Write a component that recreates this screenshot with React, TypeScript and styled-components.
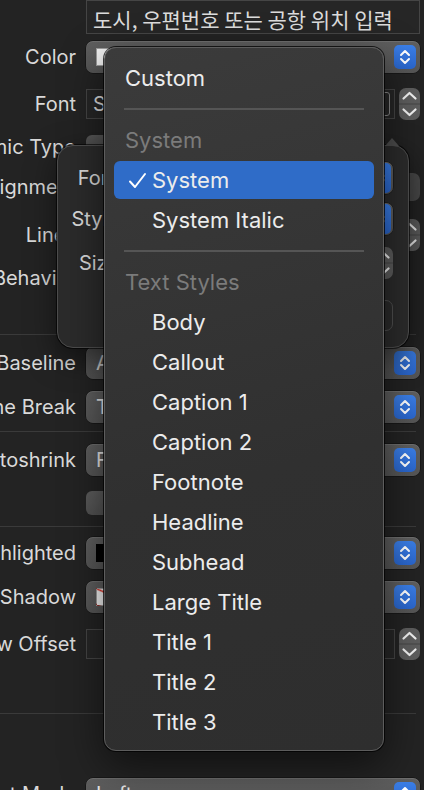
import styled, { createGlobalStyle } from "styled-components";

const GlobalStyle = createGlobalStyle`
  html, body {
    margin: 0;
    padding: 0;
    background: #232323;
  }
  body {
    font-family: Inter, "Noto Sans", sans-serif;
  }
`;

// Whole window, clipped to the screenshot size
const Page = styled.div`
  position: relative;
  width: 424px;
  height: 790px;
  overflow: hidden;
  background: #232323;
  color: #dedede;
  font-family: Inter, "Noto Sans CJK KR", sans-serif;
`;

const Inspector = styled.div`
  display: flex;
  flex-direction: column;
`;

// One inspector row: right aligned label + control
const Row = styled.div<{ $h: number; $mt?: number; $align?: string }>`
  display: grid;
  grid-template-columns: 76px 1fr;
  column-gap: 10px;
  align-items: ${(p) => p.$align ?? "center"};
  height: ${(p) => p.$h}px;
  margin-top: ${(p) => p.$mt ?? 0}px;
  padding-right: 4px;
`;

const Label = styled.div`
  min-width: 0;
  display: flex;
  justify-content: flex-end;
  white-space: nowrap;
  font-size: 20px;
  color: #d9d9d9;
`;

const Separator = styled.div<{ $mt: number }>`
  height: 1px;
  margin-top: ${(p) => p.$mt}px;
  margin-right: 8px;
  background: #3a3a3a;
`;

const Popup = styled.div<{ $pr?: number }>`
  height: 32px;
  box-sizing: border-box;
  border-radius: 7px;
  background: linear-gradient(#5f5f5f, #565656);
  box-shadow: 0 0 0 0.5px rgba(0, 0, 0, 0.6),
    inset 0 1px 0 rgba(255, 255, 255, 0.1);
  display: flex;
  align-items: center;
  gap: 8px;
  padding: 0 ${(p) => p.$pr ?? 4}px 0 10px;
  font-size: 20px;
  color: #e6e6e6;
  white-space: nowrap;
`;

const PopupText = styled.span`
  flex: 1;
  overflow: hidden;
`;

const Swatch = styled.span<{ $color: string; $none?: boolean }>`
  width: 38px;
  height: 16px;
  flex: none;
  border: 1px solid rgba(0, 0, 0, 0.35);
  background: ${(p) =>
    p.$none
      ? "linear-gradient(to top right, #f4f4f4 calc(50% - 1.5px), #e0362c 50%, #f4f4f4 calc(50% + 1.5px))"
      : p.$color};
`;

const BlueButton = styled.span<{ $h?: number }>`
  width: 22px;
  height: ${(p) => p.$h ?? 24}px;
  flex: none;
  border-radius: 5px;
  background: linear-gradient(#3b7fe8, #2a66cc);
  display: flex;
  align-items: center;
  justify-content: center;
`;

const FieldGroup = styled.div`
  display: flex;
  align-items: center;
  gap: 4px;
`;

const Field = styled.div<{ $h?: number }>`
  flex: 1;
  height: ${(p) => p.$h ?? 30}px;
  box-sizing: border-box;
  border: 1px solid #454545;
  background: #262626;
  display: flex;
  align-items: center;
  padding: 0 4px 0 6px;
  font-size: 20px;
  color: #dadada;
  white-space: nowrap;
  overflow: hidden;
`;

const KoreanField = styled(Field)`
  grid-column: 2;
  font-family: "Noto Sans CJK KR", sans-serif;
  font-size: 21px;
  padding-top: 3px;
  color: #dcdcdc;
`;

const FieldText = styled.span`
  flex: 1;
`;

const FontButton = styled.span`
  width: 20px;
  height: 24px;
  box-sizing: border-box;
  border: 1.5px solid #8a8a8a;
  border-radius: 3px;
  flex: none;
`;

const Stepper = styled.div`
  width: 21px;
  height: 32px;
  flex: none;
  border-radius: 7px;
  background: #5d5d5d;
  display: flex;
  align-items: center;
  justify-content: center;
`;

const Checkbox = styled.span`
  width: 26px;
  height: 24px;
  border-radius: 6px;
  background: linear-gradient(#5c5c5c, #525252);
`;

const Segmented = styled.div`
  height: 28px;
  border-radius: 7px;
  background: #4a4a4a;
`;

// Font popover sitting behind the menu
const Popover = styled.div`
  position: absolute;
  left: 57px;
  top: 145px;
  width: 352px;
  height: 203px;
  box-sizing: border-box;
  border-radius: 16px;
  background: #2b2b2b;
  border: 1px solid #4d4d4d;
  box-shadow: 0 0 0 1px rgba(0, 0, 0, 0.6), 0 10px 30px rgba(0, 0, 0, 0.5);
  padding: 14px 15px 0 0;
  display: flex;
  flex-direction: column;
`;

const PopoverArrow = styled.span`
  position: absolute;
  top: -8px;
  left: 327px;
  width: 0;
  height: 0;
  border-left: 7px solid transparent;
  border-right: 7px solid transparent;
  border-bottom: 8px solid #4d4d4d;
`;

const PopRow = styled.div<{ $h: number }>`
  display: grid;
  grid-template-columns: 61px 1fr;
  column-gap: 12px;
  align-items: center;
  height: ${(p) => p.$h}px;
`;

const PopRight = styled.div`
  display: flex;
  justify-content: flex-end;
`;

const PopField = styled.div`
  height: 31px;
  width: 100%;
  box-sizing: border-box;
  border: 1.5px solid #4f4f4f;
  border-radius: 7px;
`;

// The open pop-up menu
const Menu = styled.div`
  position: absolute;
  left: 104px;
  top: 47px;
  width: 280px;
  box-sizing: border-box;
  border-radius: 12px;
  border: 1px solid #5d5d5d;
  background: linear-gradient(165deg, #3b3b3b, #303030 60%, #2e2e2e);
  box-shadow: 0 0 0 1px rgba(0, 0, 0, 0.75), 0 14px 40px rgba(0, 0, 0, 0.55);
  padding: 10px 9px 8px;
  display: flex;
  flex-direction: column;
`;

const MenuItem = styled.div<{ $kind?: "header" | "item" | "selected" | "top" }>`
  position: relative;
  height: ${(p) => (p.$kind === "selected" ? 38 : 40)}px;
  margin: ${(p) => (p.$kind === "selected" ? "1px 0" : "0")};
  border-radius: 6px;
  display: flex;
  align-items: center;
  padding-left: ${(p) =>
    p.$kind === "header" || p.$kind === "top" ? 11 : 38}px;
  font-size: 22px;
  color: ${(p) => (p.$kind === "header" ? "#7b7b7b" : "#ececec")};
  background: ${(p) => (p.$kind === "selected" ? "#2f6cc8" : "transparent")};
  white-space: nowrap;
`;

const Check = styled.svg`
  position: absolute;
  left: 14px;
  top: 11px;
`;

const MenuSeparator = styled.div`
  height: 22px;
  display: flex;
  align-items: center;
  padding: 0 10px;
  &::after {
    content: "";
    flex: 1;
    height: 2px;
    background: #555555;
  }
`;

const UpDown = () => (
  <svg width="14" height="20" viewBox="0 0 14 20">
    <path
      d="M3 8 L7 4 L11 8 M3 12 L7 16 L11 12"
      stroke="#fff"
      strokeWidth="2"
      fill="none"
      strokeLinecap="round"
      strokeLinejoin="round"
    />
  </svg>
);

const StepperArrows = () => (
  <svg width="21" height="32" viewBox="0 0 21 32">
    <rect x="0" y="15.5" width="21" height="1" fill="#474747" />
    <path
      d="M4.5 10.5 L10.5 5 L16.5 10.5 M4.5 21.5 L10.5 27 L16.5 21.5"
      stroke="#f0f0f0"
      strokeWidth="2.2"
      fill="none"
      strokeLinecap="round"
      strokeLinejoin="round"
    />
  </svg>
);

const styleItems = [
  "Body",
  "Callout",
  "Caption 1",
  "Caption 2",
  "Footnote",
  "Headline",
  "Subhead",
  "Large Title",
  "Title 1",
  "Title 2",
  "Title 3",
];

const App = (): JSX.Element => {
  return (
    <>
      <GlobalStyle />
      <Page>
        <Inspector>
          <Row $h={30} $align="end">
            <KoreanField $h={34}>도시, 우편번호 또는 공항 위치 입력</KoreanField>
          </Row>
          <Row $h={54}>
            <Label>Color</Label>
            <Popup>
              <Swatch $color="#f4f4f4" />
              <PopupText>Default (Label Color)</PopupText>
              <BlueButton>
                <UpDown />
              </BlueButton>
            </Popup>
          </Row>
          <Row $h={40}>
            <Label>Font</Label>
            <FieldGroup>
              <Field>
                <FieldText>System 17.0</FieldText>
                <FontButton />
              </Field>
              <Stepper>
                <StepperArrows />
              </Stepper>
            </FieldGroup>
          </Row>
          <Row $h={46}>
            <Label>Dynamic Type</Label>
            <FieldGroup>
              <Checkbox />
            </FieldGroup>
          </Row>
          <Row $h={34}>
            <Label>Alignment</Label>
            <Segmented />
          </Row>
          <Row $h={62}>
            <Label>Lines</Label>
            <FieldGroup>
              <Field />
              <Stepper>
                <StepperArrows />
              </Stepper>
            </FieldGroup>
          </Row>
          <Row $h={22}>
            <Label>Behavior</Label>
            <FieldGroup>
              <Checkbox />
            </FieldGroup>
          </Row>
          <Separator $mt={46} />
          <Row $h={56}>
            <Label>Baseline</Label>
            <Popup>
              <PopupText>Align Baselines</PopupText>
              <BlueButton>
                <UpDown />
              </BlueButton>
            </Popup>
          </Row>
          <Row $h={30}>
            <Label>Line Break</Label>
            <Popup>
              <PopupText>Truncate Tail</PopupText>
              <BlueButton>
                <UpDown />
              </BlueButton>
            </Popup>
          </Row>
          <Separator $mt={10} />
          <Row $h={56}>
            <Label>Autoshrink</Label>
            <Popup>
              <PopupText>Fixed Font Size</PopupText>
              <BlueButton>
                <UpDown />
              </BlueButton>
            </Popup>
          </Row>
          <Row $h={30}>
            <Label />
            <FieldGroup>
              <Checkbox />
            </FieldGroup>
          </Row>
          <Separator $mt={8} />
          <Row $h={52}>
            <Label>Highlighted</Label>
            <Popup>
              <Swatch $color="#000" />
              <PopupText>Default</PopupText>
              <BlueButton>
                <UpDown />
              </BlueButton>
            </Popup>
          </Row>
          <Row $h={36}>
            <Label>Shadow</Label>
            <Popup>
              <Swatch $color="#fff" $none />
              <PopupText>Default</PopupText>
              <BlueButton>
                <UpDown />
              </BlueButton>
            </Popup>
          </Row>
          <Row $h={58}>
            <Label>Shadow Offset</Label>
            <FieldGroup>
              <Field />
              <Stepper>
                <StepperArrows />
              </Stepper>
            </FieldGroup>
          </Row>
          <Separator $mt={40} />
          <Row $h={40} $mt={60}>
            <Label>Content Mode</Label>
            <Popup>
              <PopupText>Left</PopupText>
              <BlueButton>
                <UpDown />
              </BlueButton>
            </Popup>
          </Row>
        </Inspector>

        <Popover>
          <PopoverArrow />
          <PopRow $h={36}>
            <Label>Font</Label>
            <Popup $pr={2}>
              <PopupText>System</PopupText>
              <BlueButton $h={30}>
                <UpDown />
              </BlueButton>
            </Popup>
          </PopRow>
          <PopRow $h={48}>
            <Label>Style</Label>
            <Popup $pr={2}>
              <PopupText>Regular</PopupText>
              <BlueButton $h={30}>
                <UpDown />
              </BlueButton>
            </Popup>
          </PopRow>
          <PopRow $h={42}>
            <Label>Size</Label>
            <PopRight>
              <Stepper>
                <StepperArrows />
              </Stepper>
            </PopRight>
          </PopRow>
          <PopRow $h={64}>
            <Label />
            <PopField />
          </PopRow>
        </Popover>

        <Menu>
          <MenuItem $kind="top">Custom</MenuItem>
          <MenuSeparator />
          <MenuItem $kind="header">System</MenuItem>
          <MenuItem $kind="selected">
            <Check width="20" height="18" viewBox="0 0 20 18">
              <path
                d="M2 9.5 L7 15 L17 2"
                stroke="#fff"
                strokeWidth="2"
                fill="none"
                strokeLinecap="round"
                strokeLinejoin="round"
              />
            </Check>
            System
          </MenuItem>
          <MenuItem>System Italic</MenuItem>
          <MenuSeparator />
          <MenuItem $kind="header">Text Styles</MenuItem>
          {styleItems.map((s) => (
            <MenuItem key={s}>{s}</MenuItem>
          ))}
        </Menu>
      </Page>
    </>
  );
};

export default App;
